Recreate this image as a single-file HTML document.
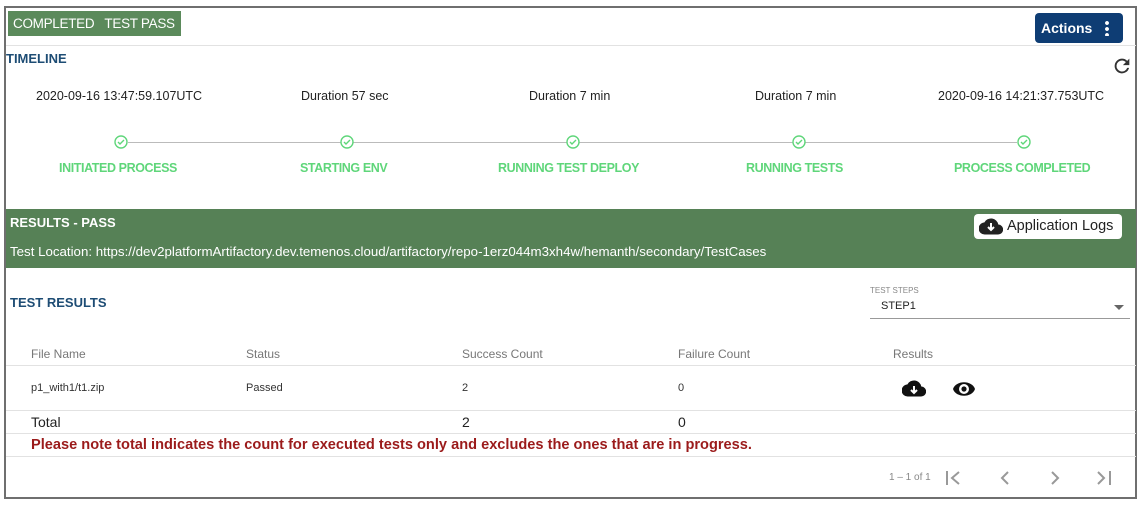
<!DOCTYPE html>
<html><head><style>
*{margin:0;padding:0;box-sizing:border-box}
body{width:1140px;height:506px;background:#fff;font-family:"Liberation Sans",Arial,sans-serif;position:relative;overflow:hidden;color:#222}
.a{position:absolute;white-space:nowrap}
.frame{position:absolute;left:4px;top:6px;width:1133px;height:493px;border:2px solid #6f6f6f}
.hl{position:absolute;height:1px;background:#e2e2e2}
.lbl{color:#5fd67a;font-weight:bold;font-size:12.5px;letter-spacing:-0.4px}
.ts{font-size:12.5px;color:#222}
.th{font-size:12px;color:#777}
.td{font-size:11px;color:#333}
.pg{font-size:16px;color:#aaa;transform:scaleY(1.4)}
</style></head><body>
<div class="frame"></div>
<div class="a" style="left:8px;top:11px;width:173px;height:25px;background:#5b8a5b;color:#fff;font-size:13.5px;line-height:25px;padding-left:5px;letter-spacing:-0.3px">COMPLETED&nbsp;&nbsp; TEST PASS</div>
<div class="a" style="left:1035px;top:13px;width:88px;height:30px;background:#0e3d74;border-radius:4px;color:#fff;font-weight:bold;font-size:14px;line-height:30px;padding-left:6px">Actions<span style="position:absolute;right:14px;top:7px;width:4px;height:16px;background:radial-gradient(circle,#fff 1.8px,transparent 2px) 0 0/4px 6px repeat-y"></span></div>
<div class="hl" style="left:6px;top:45px;width:1130px"></div>
<div class="a" style="left:6px;top:51px;color:#1d4c74;font-weight:bold;font-size:13px">TIMELINE</div>
<svg class="a" style="left:1111px;top:55px" width="22" height="22" viewBox="0 0 24 24"><path d="M17.65 6.35A7.96 7.96 0 0 0 12 4a8 8 0 1 0 7.73 10h-2.08A6 6 0 1 1 12 6c1.66 0 3.14.69 4.22 1.78L13 11h7V4l-2.35 2.35z" fill="#333"/></svg>
<div class="a ts" style="left:36px;top:89px">2020-09-16 13:47:59.107UTC</div>
<div class="a ts" style="left:301px;top:89px">Duration 57 sec</div>
<div class="a ts" style="left:529px;top:89px">Duration 7 min</div>
<div class="a ts" style="left:755px;top:89px">Duration 7 min</div>
<div class="a ts" style="left:938px;top:89px">2020-09-16 14:21:37.753UTC</div>
<div class="a" style="left:128px;top:142px;width:889px;height:1px;background:#bbb"></div>
<svg class="a" style="left:0;top:134px" width="1140" height="17">
<g fill="#fff" stroke="#5fd67a" stroke-width="1.4">
<circle cx="121" cy="8" r="6"/><circle cx="347" cy="8" r="6"/><circle cx="573" cy="8" r="6"/><circle cx="799" cy="8" r="6"/><circle cx="1024" cy="8" r="6"/></g>
<g fill="none" stroke="#5fd67a" stroke-width="1.4">
<path d="M118 8l2 2 4-4"/><path d="M344 8l2 2 4-4"/><path d="M570 8l2 2 4-4"/><path d="M796 8l2 2 4-4"/><path d="M1021 8l2 2 4-4"/></g></svg>
<div class="a lbl" style="left:59px;top:161px">INITIATED PROCESS</div>
<div class="a lbl" style="left:300px;top:161px">STARTING ENV</div>
<div class="a lbl" style="left:498px;top:161px">RUNNING TEST DEPLOY</div>
<div class="a lbl" style="left:746px;top:161px">RUNNING TESTS</div>
<div class="a lbl" style="left:954px;top:161px">PROCESS COMPLETED</div>
<div class="a" style="left:6px;top:209px;width:1130px;height:59px;background:#568156"></div>
<div class="a" style="left:10px;top:215px;color:#fff;font-weight:bold;font-size:13px">RESULTS - PASS</div>
<div class="a" style="left:10px;top:244px;color:#fff;font-size:13.3px">Test Location: https://dev2platformArtifactory.dev.temenos.cloud/artifactory/repo-1erz044m3xh4w/hemanth/secondary/TestCases</div>
<div class="a" style="left:974px;top:214px;width:148px;height:25px;background:#fff;border-radius:4px;font-size:14.5px;line-height:25px;padding-left:33px;color:#222">Application Logs
<svg style="position:absolute;left:5px;top:4px" width="24" height="17" viewBox="0 0 24 17"><path d="M19.3 6.5A7.5 7.5 0 0 0 5.3 4.5 6 6 0 0 0 6 16.5h13a5 5 0 0 0 .3-10z" fill="#222"/><path d="M12 5v6M9 9l3 3 3-3" stroke="#fff" stroke-width="2" fill="none"/></svg></div>
<div class="a" style="left:10px;top:295px;color:#1d4c74;font-weight:bold;font-size:13px">TEST RESULTS</div>
<div class="a" style="left:870px;top:286px;font-size:8px;color:#888">TEST STEPS</div>
<div class="a" style="left:881px;top:300px;font-size:11px;color:#222">STEP1</div>
<div class="a" style="left:1114px;top:305px;width:0;height:0;border-left:5px solid transparent;border-right:5px solid transparent;border-top:5px solid #666"></div>
<div class="a" style="left:870px;top:318px;width:260px;height:1px;background:#999"></div>
<div class="a th" style="left:31px;top:347px">File Name</div>
<div class="a th" style="left:246px;top:347px">Status</div>
<div class="a th" style="left:462px;top:347px">Success Count</div>
<div class="a th" style="left:678px;top:347px">Failure Count</div>
<div class="a th" style="left:893px;top:347px">Results</div>
<div class="hl" style="left:6px;top:365px;width:1130px"></div>
<div class="a td" style="left:31px;top:382px">p1_with1/t1.zip</div>
<div class="a td" style="left:246px;top:382px">Passed</div>
<div class="a td" style="left:462px;top:382px">2</div>
<div class="a td" style="left:678px;top:382px">0</div>
<svg class="a" style="left:902px;top:380px" width="24" height="17" viewBox="0 0 24 17"><path d="M19.3 6.5A7.5 7.5 0 0 0 5.3 4.5 6 6 0 0 0 6 16.5h13a5 5 0 0 0 .3-10z" fill="#111"/><path d="M12 6v6M9 10l3 3 3-3" stroke="#fff" stroke-width="2" fill="none"/></svg>
<svg class="a" style="left:952px;top:379px" width="24" height="20" viewBox="0 0 24 20"><path d="M1 10C4 1 20 1 23 10 20 19 4 19 1 10z" fill="#111"/><circle cx="12" cy="10" r="5" fill="#fff"/><circle cx="12" cy="10" r="2.6" fill="#111"/></svg>
<div class="hl" style="left:6px;top:410px;width:1130px"></div>
<div class="a" style="left:31px;top:414px;font-size:14px;color:#222">Total</div>
<div class="a" style="left:462px;top:414px;font-size:14px;color:#222">2</div>
<div class="a" style="left:678px;top:414px;font-size:14px;color:#222">0</div>
<div class="hl" style="left:6px;top:433px;width:1130px"></div>
<div class="a" style="left:31px;top:437px;font-size:14.6px;font-weight:bold;color:#9b1b1b">Please note total indicates the count for executed tests only and excludes the ones that are in progress.</div>
<div class="hl" style="left:6px;top:456px;width:1130px"></div>
<div class="a" style="left:889px;top:472px;font-size:10px;color:#888">1 – 1 of 1</div>
<svg class="a" style="left:940px;top:468px" width="180" height="20" fill="none" stroke="#999" stroke-width="2">
<path d="M7 3v14M19 4l-7 6 7 6"/><path d="M68 4l-6 6 6 6"/><path d="M112 4l6 6-6 6"/><path d="M158 4l6 6-6 6M170 3v14"/></svg>
</body></html>
